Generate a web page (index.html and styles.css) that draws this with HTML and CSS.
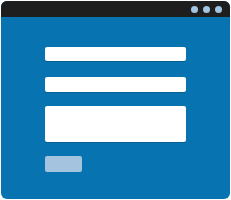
FILE: index.html
```html
<!DOCTYPE html>
<html>
<head>
<meta charset="utf-8">
<link rel="stylesheet" href="styles.css">
</head>
<body>
<div class="window">
  <div class="titlebar">
    <span class="dot"></span><span class="dot"></span><span class="dot"></span>
  </div>
  <div class="content">
    <div class="field"></div>
    <div class="field second"></div>
    <div class="field area"></div>
    <div class="button"></div>
  </div>
</div>
</body>
</html>
```
FILE: styles.css
```css
html, body {
  margin: 0;
  padding: 0;
  background: #ffffff;
}
.window {
  margin: 1px;
  width: 229px;
  height: 198px;
  border-radius: 6px;
  overflow: hidden;
  background: #0873b1;
  display: flex;
  flex-direction: column;
}
.titlebar {
  height: 16px;
  background: #1e1e1e;
  display: flex;
  justify-content: flex-end;
  align-items: center;
  gap: 5px;
  padding-right: 8px;
}
.dot {
  width: 7px;
  height: 7px;
  border-radius: 50%;
  background: #a3c5e2;
}
.content {
  padding: 30px 0 0 44px;
  display: flex;
  flex-direction: column;
  align-items: flex-start;
}
.field {
  width: 141px;
  height: 14px;
  background: #ffffff;
  border-radius: 2px;
  box-shadow: 0 1px 0 rgba(0, 0, 0, 0.18);
  margin-bottom: 16px;
}
.second {
  height: 15px;
  margin-bottom: 14px;
}
.area {
  height: 36px;
  margin-bottom: 14px;
}
.button {
  width: 37px;
  height: 16px;
  border-radius: 2px;
  background: #a4c3df;
}
```
